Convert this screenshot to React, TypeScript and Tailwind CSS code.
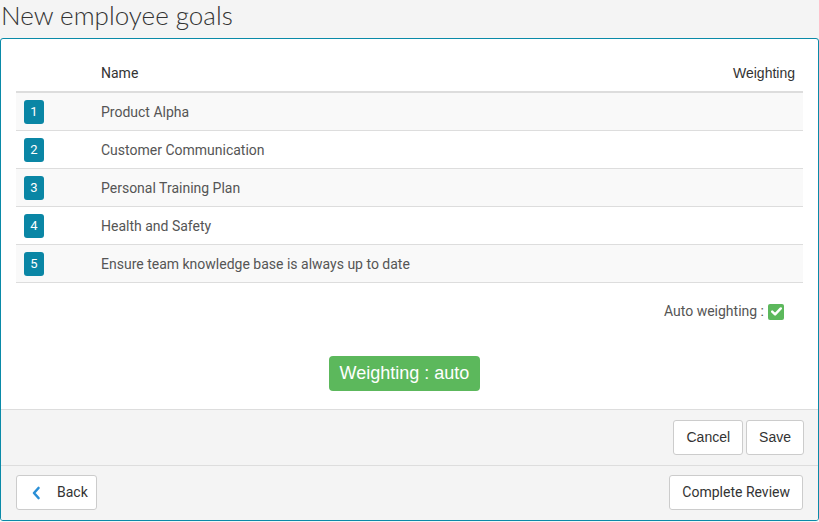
import React from "react";

const goals = [
  "Product Alpha",
  "Customer Communication",
  "Personal Training Plan",
  "Health and Safety",
  "Ensure team knowledge base is always up to date",
];

export default function App() {
  return (
    <div className="w-[819px] h-[522px] bg-[#f4f4f4] overflow-hidden" style={{ fontFamily: "Roboto, 'Liberation Sans', sans-serif" }}>
      <h1 className="h-[38px] pl-[1px] text-[26px] leading-[30px] text-[#333] font-light" style={{ fontFamily: "Lato, Roboto, sans-serif" }}>
        New employee goals
      </h1>
      <div className="w-[819px] h-[483px] border border-[#0a8aa8] rounded-[3px] bg-white flex flex-col overflow-hidden">
        <div className="flex-1 px-[15px] pt-[17px]">
          <div className="flex h-[37px] items-center border-b-2 border-[#dddddd] text-[14px] text-[#333]">
            <div className="w-[85px]" />
            <div className="flex-1">Name</div>
            <div className="pr-[8px]" style={{ fontFamily: "'Liberation Sans', Arial, sans-serif" }}>Weighting</div>
          </div>
          {goals.map((g, i) => (
            <div
              key={i}
              className={`flex h-[38px] items-center border-b border-[#dddddd] text-[14px] text-[#555] ${i % 2 === 0 ? "bg-[#f9f9f9]" : "bg-white"}`}
            >
              <div className="w-[85px] pl-[8px]">
                <div className="w-[20px] h-[24px] rounded-[3px] bg-[#0a86a5] text-white text-[13px] flex items-center justify-center">
                  {i + 1}
                </div>
              </div>
              <div className="flex-1 pt-[2px]">{g}</div>
            </div>
          ))}
          <div className="flex justify-end items-center pr-[19px] pt-[18px] text-[14px] text-[#555]">
            <span className="mr-[4px]">Auto weighting :</span>
            <span className="w-[16px] h-[16px] rounded-[2px] bg-[#5cb85c] flex items-center justify-center">
              <svg width="11" height="9" viewBox="0 0 11 9">
                <path d="M1.2 4.6 L4.1 7.4 L9.8 1.4" stroke="white" strokeWidth="2.4" fill="none" strokeLinecap="round" strokeLinejoin="round" />
              </svg>
            </span>
          </div>
          <div className="flex justify-center pt-[34px]">
            <div className="ml-[-10px] h-[35px] px-[11px] rounded-[4px] bg-[#5cb85c] text-white text-[18px] flex items-center" style={{ fontFamily: "'Liberation Sans', Arial, sans-serif" }}>
              Weighting : auto
            </div>
          </div>
        </div>
        <div className="h-[56px] bg-[#f4f4f4] border-t border-[#dddddd] flex items-center justify-end gap-[3px] pr-[14px]">
          <button className="h-[35px] px-[12px] bg-white border border-[#cccccc] rounded-[3px] text-[14px] text-[#333]" style={{ fontFamily: "'Liberation Sans', Arial, sans-serif" }}>Cancel</button>
          <button className="h-[35px] px-[12px] bg-white border border-[#cccccc] rounded-[3px] text-[14px] text-[#333]" style={{ fontFamily: "'Liberation Sans', Arial, sans-serif" }}>Save</button>
        </div>
        <div className="h-[55px] bg-[#f4f4f4] border-t border-[#dddddd] flex items-center justify-between px-[15px] pb-[1px]">
          <button className="h-[35px] w-[81px] bg-white border border-[#cccccc] rounded-[3px] text-[14px] text-[#333] flex items-center pl-[14px]">
            <svg width="10" height="14" viewBox="0 0 10 14" className="mr-[16px]">
              <path d="M7.5 2 L3 7 L7.5 12" stroke="#2a8fd6" strokeWidth="2.6" fill="none" strokeLinecap="round" strokeLinejoin="round" />
            </svg>
            Back
          </button>
          <button className="h-[35px] px-[12px] bg-white border border-[#cccccc] rounded-[3px] text-[14px] text-[#333]">Complete Review</button>
        </div>
      </div>
    </div>
  );
}
